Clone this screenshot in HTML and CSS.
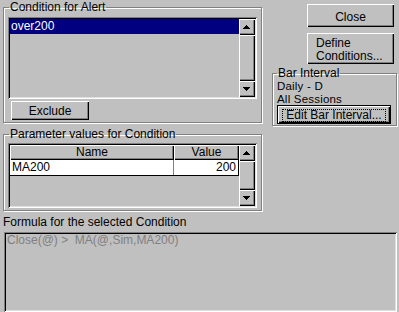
FILE: index.html
```html
<!DOCTYPE html>
<html lang="en">
<head>
  <meta charset="UTF-8">
  <meta name="viewport" content="width=device-width, initial-scale=1.0">
  <title>Condition for Alert</title>
  <link rel="stylesheet" href="styles.css">
</head>
<body>
  <div class="top">
    <div class="left">
      <fieldset class="group group-alert">
        <legend>Condition for Alert</legend>
        <div class="sunken listbox">
          <div class="list-items">
            <div class="list-item selected">over200</div>
          </div>
          <div class="scrollbar">
            <div class="raised sb-btn">
              <svg width="7" height="4" viewBox="0 0 7 4"><path d="M3 0h1v1H3zM2 1h3v1H2zM1 2h5v1H1zM0 3h7v1H0z"/></svg>
            </div>
            <div class="raised sb-thumb"></div>
            <div class="raised sb-btn">
              <svg width="7" height="4" viewBox="0 0 7 4"><path d="M0 0h7v1H0zM1 1h5v1H1zM2 2h3v1H2zM3 3h1v1H3z"/></svg>
            </div>
          </div>
        </div>
        <button class="btn btn-exclude">Exclude</button>
      </fieldset>

      <fieldset class="group group-params">
        <legend>Parameter values for Condition</legend>
        <div class="sunken grid">
          <div class="grid-table">
            <div class="grid-row grid-head">
              <div class="cell head-cell">Name</div>
              <div class="cell head-cell">Value</div>
            </div>
            <div class="grid-row grid-data">
              <div class="cell">MA200</div>
              <div class="cell num">200</div>
            </div>
          </div>
          <div class="scrollbar">
            <div class="raised sb-btn">
              <svg width="7" height="4" viewBox="0 0 7 4"><path d="M3 0h1v1H3zM2 1h3v1H2zM1 2h5v1H1zM0 3h7v1H0z"/></svg>
            </div>
            <div class="raised sb-thumb"></div>
            <div class="raised sb-btn">
              <svg width="7" height="4" viewBox="0 0 7 4"><path d="M0 0h7v1H0zM1 1h5v1H1zM2 2h3v1H2zM3 3h1v1H3z"/></svg>
            </div>
          </div>
        </div>
      </fieldset>
    </div>

    <div class="right">
      <button class="btn btn-side btn-close">Close</button>
      <button class="btn btn-side btn-define"><span class="line">Define</span><span class="line">Conditions...</span></button>
      <fieldset class="group group-bar">
        <legend>Bar Interval</legend>
        <div class="bar-line first">Daily - D</div>
        <div class="bar-line">All Sessions</div>
        <button class="btn btn-default"><span class="focus">Edit Bar Interval...</span></button>
      </fieldset>
    </div>
  </div>

  <div class="formula-label">Formula for the selected Condition</div>
  <div class="sunken formula">Close(@) &gt;  MA(@,Sim,MA200)</div>
</body>
</html>
```

FILE: styles.css
```css
* {
  box-sizing: border-box;
}

body {
  margin: 0;
  width: 399px;
  height: 312px;
  overflow: hidden;
  background-color: #c0c0c0;
  font-family: "Liberation Sans", Arial, sans-serif;
  font-size: 12px;
  color: #000;
}

.top {
  display: flex;
}

.left {
  width: 259px;
  margin-left: 3px;
}

.right {
  width: 125px;
  margin-left: 10px;
  display: flex;
  flex-direction: column;
  align-items: flex-start;
}

/* etched group box */
.group {
  margin: 0;
  padding: 3px 4px 2px;
  border: 1px solid #808080;
  box-shadow: 1px 1px 0 #fff, inset 1px 1px 0 #fff;
  min-width: 0;
}

.group legend {
  padding: 0 1px;
  margin-left: 1px;
  line-height: 14px;
}

/* 3d borders */
.sunken {
  padding: 2px;
  box-shadow: inset 1px 1px 0 #808080, inset -1px -1px 0 #fff,
              inset 2px 2px 0 #000, inset -2px -2px 0 #dfdfdf;
}

.raised {
  background-color: #c0c0c0;
  box-shadow: inset 1px 1px 0 #fff, inset -1px -1px 0 #000,
              inset -2px -2px 0 #808080;
}

/* list box */
.listbox {
  display: flex;
  height: 82px;
}

.list-items {
  flex: 1;
}

.list-item {
  height: 15px;
  line-height: 15px;
  padding-left: 1px;
}

.list-item.selected {
  background-color: #000080;
  color: #fff;
}

.scrollbar {
  width: 16px;
  display: flex;
  flex-direction: column;
}

.sb-btn {
  height: 16px;
  display: flex;
  align-items: center;
  justify-content: center;
  padding: 0 1px 1px 0;
}

.sb-btn svg {
  display: block;
}

.sb-thumb {
  flex: 1;
}

/* buttons */
.btn {
  font: inherit;
  color: #000;
  background-color: #c0c0c0;
  border: 0;
  padding: 0;
  box-shadow: inset 1px 1px 0 #fff, inset -1px -1px 0 #000,
              inset -2px -2px 0 #808080;
}

.btn-exclude {
  display: block;
  width: 78px;
  height: 19px;
  margin: 2px 0 0 3px;
}

.btn-side {
  width: 87px;
  margin-left: 35px;
}

.btn-close {
  height: 23px;
  margin-top: 4px;
  padding-top: 2px;
}

.btn-define {
  height: 31px;
  margin-top: 6px;
  padding: 2px 0 0 9px;
  display: flex;
  flex-direction: column;
  justify-content: center;
  align-items: flex-start;
}

.btn-define .line {
  line-height: 13px;
}

/* parameter grid */
.group-params {
  margin-top: 4px;
  padding-top: 2px;
}

.grid {
  display: flex;
  height: 65px;
}

.grid-table {
  flex: 1;
}

.grid-row {
  display: grid;
  grid-template-columns: 164px 65px;
}

.head-cell {
  height: 15px;
  line-height: 14px;
  text-align: center;
  box-shadow: inset 1px 1px 0 #fff, inset -1px -1px 0 #000,
              inset -2px -2px 0 #808080;
}

.grid-data {
  background-color: #fff;
  height: 16px;
  border-bottom: 1px solid #000;
}

.grid-data .cell {
  line-height: 15px;
  padding: 0 2px;
  border-right: 1px solid #808080;
}

.grid-data .cell:last-child {
  border-right-color: #000;
}

.num {
  text-align: right;
}

/* bar interval */
.group-bar {
  width: 125px;
  margin-top: 3px;
  padding: 0 4px 1px;
}

.group-bar legend {
  margin-left: 0;
  line-height: 12px;
}

.bar-line {
  font-size: 11.5px;
  line-height: 12.5px;
  letter-spacing: 0.2px;
}

.bar-line.first {
  margin-top: 1px;
}

.btn-default {
  width: 114px;
  height: 19px;
  margin-top: 0;
  border: 1px solid #000;
}

.focus {
  display: inline-block;
  border: 1px dotted #000;
  padding: 0 3px;
  line-height: 11px;
}

/* formula */
.formula-label {
  margin: 4px 0 0 3px;
  line-height: 14px;
}

.formula {
  width: 393px;
  height: 80px;
  margin: 3px 0 0 4px;
  padding: 2px 3px;
  color: #808080;
  white-space: pre;
  line-height: 12px;
}
```
